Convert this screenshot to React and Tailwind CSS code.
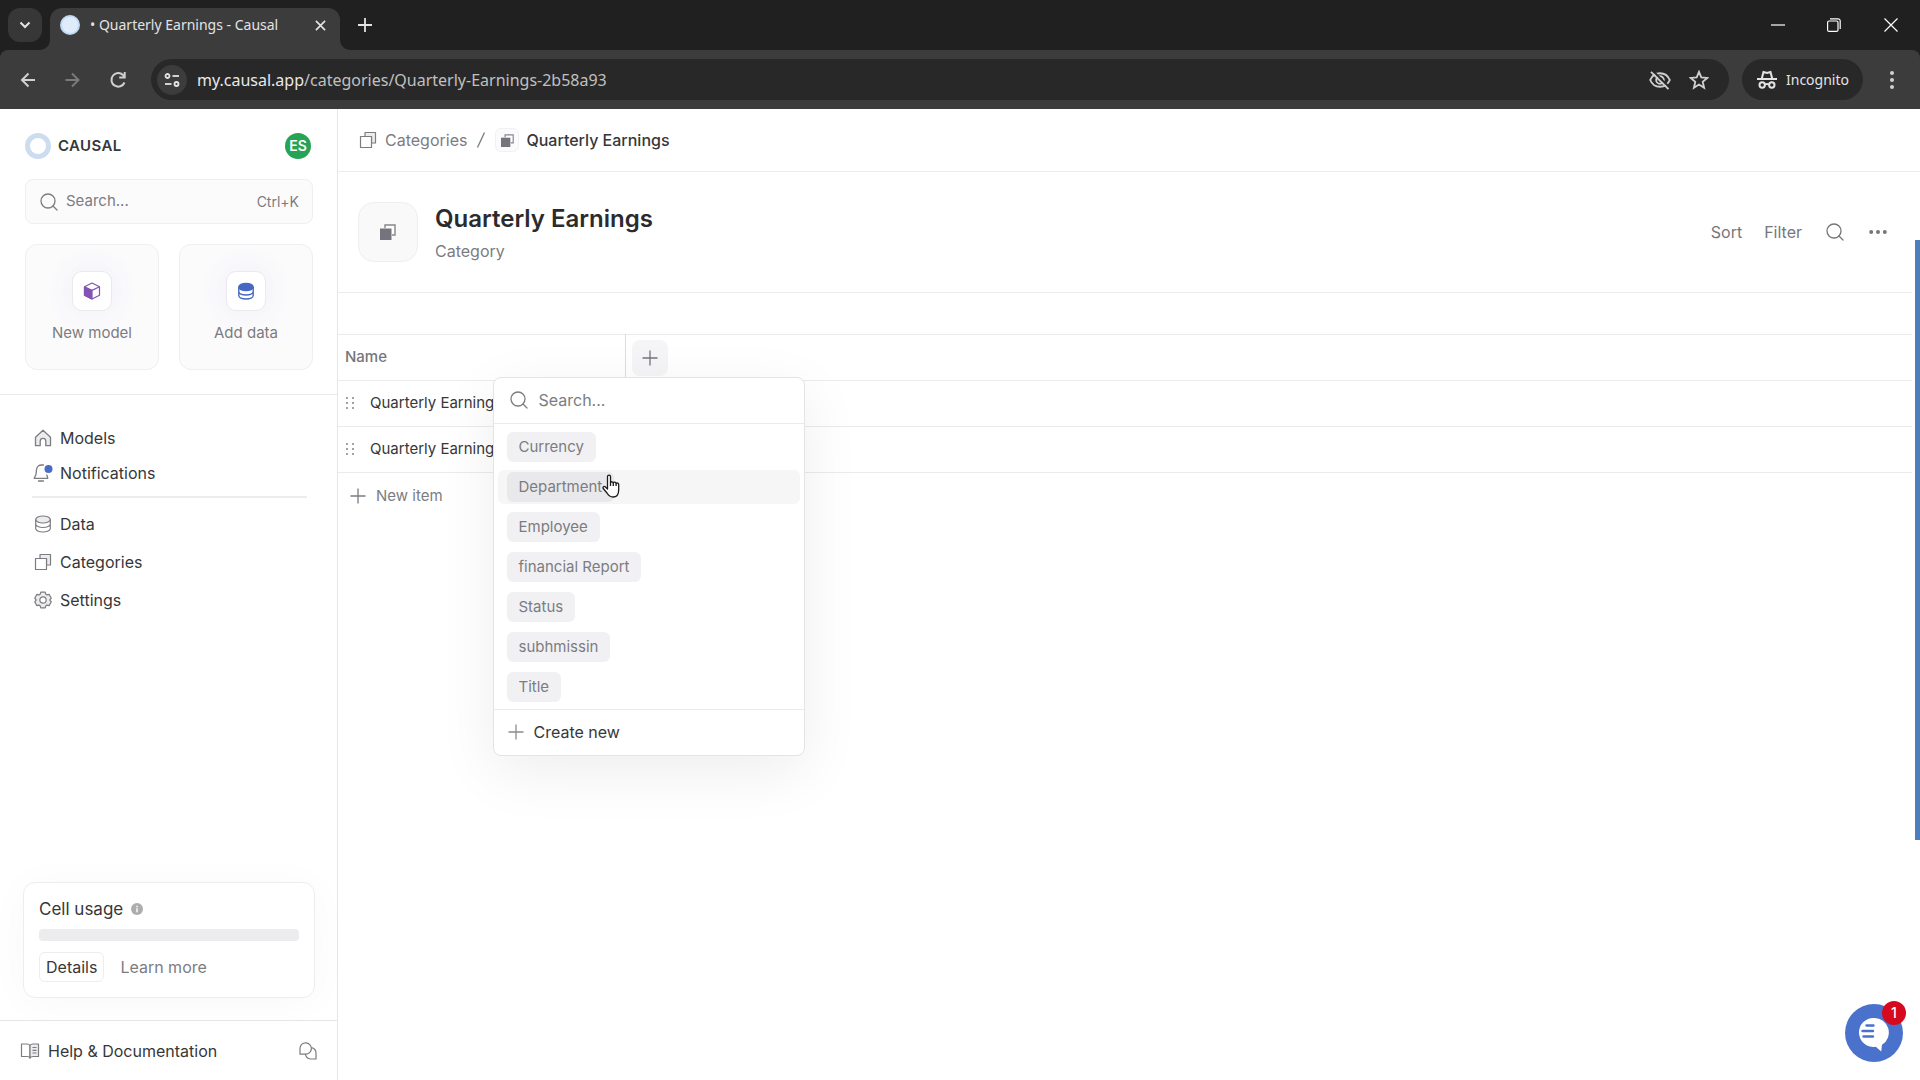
import { useState } from 'react';

const NAV_TOP = [
  { label: 'Models', icon: HomeIcon },
  { label: 'Notifications', icon: BellIcon },
];

const NAV_BOTTOM = [
  { label: 'Data', icon: DataIcon },
  { label: 'Categories', icon: StackIcon },
  { label: 'Settings', icon: GearIcon },
];

const OPTIONS = ['Currency', 'Department', 'Employee', 'financial Report', 'Status', 'subhmissin', 'Title'];

const ROWS = ['Quarterly Earning 1', 'Quarterly Earning 2'];

export default function App() {
  return (
    <div className="flex h-screen flex-col overflow-hidden bg-white font-['Inter',sans-serif] text-[#37373a]">
      <BrowserChrome />
      <div className="flex min-h-0 flex-1">
        <Sidebar />
        <Main />
      </div>
      <div className="absolute top-60 right-0 h-[600px] w-[5px] bg-[#4c7dbd]" />
      <ChatLauncher />
    </div>
  );
}

/* ---------- Browser window ---------- */

function BrowserChrome() {
  return (
    <header className="shrink-0 bg-[#202020] font-['Noto_Sans',sans-serif] text-[#e3e3e3]">
      <div className="flex h-[50px] items-end pl-2">
        <button aria-label="Search tabs" className="mb-2 flex h-[34px] w-[34px] items-center justify-center rounded-xl bg-[#373737]">
          <svg viewBox="0 0 12 12" className="h-3 w-3" fill="none" stroke="currentColor" strokeWidth="2">
            <path d="M1.5 3.5 6 8l4.500-4.500" />
          </svg>
        </button>
        <div className="relative ml-2 flex h-[42px] w-[290px] items-center rounded-t-xl bg-[#3c3c3c] pr-[10px] pb-2 pl-[10px]">
          <span className="h-5 w-5 shrink-0 rounded-full border-2 border-[#c3d9f2] bg-[#dfecfb]" />
          <span className="ml-[10px] flex-1 text-sm whitespace-nowrap">• Quarterly Earnings - Causal</span>
          <button aria-label="Close tab" className="flex h-5 w-5 items-center justify-center">
            <svg viewBox="0 0 12 12" className="h-[11px] w-[11px]" fill="none" stroke="currentColor" strokeWidth="1.800">
              <path d="m1 1 10 10M11 1 1 11" />
            </svg>
          </button>
          {/* flared tab feet */}
          <svg viewBox="0 0 10 10" className="absolute bottom-0 -left-[10px] h-[10px] w-[10px]" fill="#3c3c3c">
            <path d="M10 0v10H0A10 10 0 0 0 10 0z" />
          </svg>
          <svg viewBox="0 0 10 10" className="absolute -right-[10px] bottom-0 h-[10px] w-[10px]" fill="#3c3c3c">
            <path d="M0 0v10h10A10 10 0 0 1 0 0z" />
          </svg>
        </div>
        <button aria-label="New tab" className="mb-[10px] ml-[10px] flex h-[30px] w-[30px] items-center justify-center">
          <svg viewBox="0 0 14 14" className="h-[14px] w-[14px]" fill="none" stroke="currentColor" strokeWidth="1.800">
            <path d="M7 0v14M0 7h14" />
          </svg>
        </button>
        <div className="ml-auto flex h-full items-center">
          <button aria-label="Minimize" className="flex h-full w-14 items-center justify-center">
            <svg viewBox="0 0 14 14" className="h-[14px] w-[14px]" stroke="#fff" strokeWidth="1.200"><path d="M0 7h14" /></svg>
          </button>
          <button aria-label="Restore" className="flex h-full w-14 items-center justify-center">
            <svg viewBox="0 0 14 14" className="h-[14px] w-[14px]" fill="none" stroke="#fff" strokeWidth="1.200">
              <rect x="0.600" y="3" width="10.400" height="10.400" rx="1.500" />
              <path d="M3 .8h8a2.200 2.200 0 0 1 2.200 2.200v8" />
            </svg>
          </button>
          <button aria-label="Close" className="flex h-full w-[58px] items-center justify-center">
            <svg viewBox="0 0 14 14" className="h-[14px] w-[14px]" stroke="#fff" strokeWidth="1.200"><path d="m.5.5 13 13M13.500.5l-13 13" /></svg>
          </button>
        </div>
      </div>

      <div className="flex h-[59px] items-center rounded-t-lg bg-[#3c3c3c] pr-[18px] pl-[18px]">
        <div className="flex items-center gap-[25px] text-[#d0d0d0]">
          <button aria-label="Back">
            <svg viewBox="0 0 20 20" className="h-5 w-5" fill="none" stroke="currentColor" strokeWidth="2"><path d="M17 10H4M10.500 3.500 4 10l6.500 6.500" /></svg>
          </button>
          <button aria-label="Forward" className="text-[#7a7a7a]">
            <svg viewBox="0 0 20 20" className="h-5 w-5" fill="none" stroke="currentColor" strokeWidth="2"><path d="M2.500 10h13M9 3.500l6.500 6.500-6.500 6.500" /></svg>
          </button>
          <button aria-label="Reload">
            <svg viewBox="0 0 20 20" className="h-5 w-5" fill="none" stroke="currentColor" strokeWidth="2">
              <path d="M16.500 12.500A6.800 6.800 0 1 1 15 5l1.500 1.800" />
              <path d="M16.700 2v5.500h-5.500" />
            </svg>
          </button>
        </div>
        <div className="ml-[23px] flex h-[41px] flex-1 items-center rounded-full bg-[#282828] pr-5 pl-[6px]">
          <button aria-label="Site information" className="flex h-[30px] w-[30px] items-center justify-center rounded-full bg-[#3c3c3c]">
            <svg viewBox="0 0 16 16" className="h-4 w-4" fill="none" stroke="#e3e3e3" strokeWidth="1.800">
              <circle cx="3.500" cy="4" r="2" /><path d="M8.500 4H15" />
              <circle cx="12.500" cy="12" r="2" /><path d="M1 12h6.500" />
            </svg>
          </button>
          <p className="ml-[10px] flex-1 text-base text-[#c0c0c0]">
            <span className="text-[#e9e9e9]">my.causal.app</span>/categories/Quarterly-Earnings-2b58a93
          </p>
          <button aria-label="Third-party cookies blocked" className="mr-[18px] text-[#d0d0d0]">
            <svg viewBox="0 0 22 20" className="h-5 w-[22px]" fill="none" stroke="currentColor" strokeWidth="1.900">
              <path d="M1.200 10C3 5.800 6.800 3.200 11 3.200S19 5.800 20.800 10C19 14.200 15.200 16.800 11 16.800S3 14.200 1.200 10z" />
              <circle cx="11" cy="10" r="3.800" />
              <path d="M3.600.6 20.800 17.800" stroke="#282828" strokeWidth="2" />
              <path d="M2 1.800 19.500 19.200" />
            </svg>
          </button>
          <button aria-label="Bookmark" className="text-[#d0d0d0]">
            <svg viewBox="0 0 20 20" className="h-5 w-5" fill="none" stroke="currentColor" strokeWidth="1.800">
              <path d="m10 1.800 2.300 5.600 6 .5-4.600 3.900 1.400 5.900-5.100-3.200-5.100 3.200 1.400-5.900-4.600-3.900 6-.5z" />
            </svg>
          </button>
        </div>
        <button className="ml-[13px] flex h-[41px] w-[121px] items-center rounded-full bg-[#282828] pl-[15px]">
          <svg viewBox="0 0 20 20" className="h-5 w-5" fill="none" stroke="currentColor" strokeWidth="2">
            <path d="M0 9h20" />
            <path d="M4.800 8.500 6.500 2l3.500 1 3.500-1 1.700 6.500" />
            <circle cx="5.200" cy="15" r="2.700" /><circle cx="14.800" cy="15" r="2.700" />
            <path d="M7.900 14.500q2.100-1.200 4.200 0" />
          </svg>
          <span className="ml-[9px] text-sm">Incognito</span>
        </button>
        <button aria-label="Menu" className="ml-[19px] flex h-5 w-5 items-center justify-center">
          <svg viewBox="0 0 4 18" className="h-[18px] w-1" fill="#d0d0d0">
            <circle cx="2" cy="2" r="2" /><circle cx="2" cy="9" r="2" /><circle cx="2" cy="16" r="2" />
          </svg>
        </button>
      </div>
    </header>
  );
}

/* ---------- Sidebar ---------- */

function Sidebar() {
  return (
    <aside className="flex w-[338px] shrink-0 flex-col border-r border-[#e6e6e9]">
      <div className="border-b border-[#ebebed] pt-6 pr-6 pb-6 pl-[25px]">
        <div className="flex items-center justify-between pr-[2px]">
          <div className="flex items-center gap-[7px]">
            <span className="h-[26px] w-[26px] rounded-full border-[5px] border-[#cddcee]" />
            <span className="text-[15px] font-semibold tracking-wide">CAUSAL</span>
          </div>
          <button className="flex h-[26px] w-[26px] items-center justify-center rounded-full bg-[#27a356] text-sm font-semibold text-white">ES</button>
        </div>

        <label className="mt-5 flex h-[45px] items-center rounded-lg border border-[#efeff2] bg-[#fbfbfc] pr-[13px] pl-[14px] text-[#7c7c81]">
          <SearchIcon />
          <input
            aria-label="Search"
            placeholder="Search..."
            className="ml-2 w-0 flex-1 bg-transparent text-[15px] outline-none placeholder:text-[#7c7c81]"
          />
          <kbd className="font-['Inter',sans-serif] text-sm">Ctrl+K</kbd>
        </label>

        <div className="mt-5 grid grid-cols-2 gap-5">
          <ActionCard label="New model"><CubeIcon /></ActionCard>
          <ActionCard label="Add data"><DatabaseIcon /></ActionCard>
        </div>
      </div>

      <nav className="pt-[25px] pr-[30px] pl-8">
        {NAV_TOP.map((item) => (
          <NavLink key={item.label} {...item} height="h-[35px]" />
        ))}
        <hr className="mt-[6px] mb-[7px] border-t-2 border-[#ededef]" />
        {NAV_BOTTOM.map((item) => (
          <NavLink key={item.label} {...item} height="h-[38px]" />
        ))}
      </nav>

      <section className="mr-[22px] mb-[22px] ml-[23px] mt-auto rounded-xl border border-[#ededf0] px-[15px] pt-[14px] pb-[15px] shadow-[0_4px_40px_rgba(0,0,0,0.03)]">
        <div className="flex items-center gap-2">
          <h2 className="text-[17px] leading-6">Cell usage</h2>
          <svg viewBox="0 0 12 12" className="h-3 w-3" fill="#adadb0">
            <circle cx="6" cy="6" r="6" />
            <path d="M5.300 5.200h1.400v4H5.300zM5.300 2.800h1.400v1.400H5.300z" fill="#fff" />
          </svg>
        </div>
        <div className="mt-2 h-3 rounded-sm bg-[#ececee]" />
        <div className="mt-[11px] flex items-center gap-4 text-base">
          <button className="h-[30px] rounded-md border border-[#ededf0] px-[6px]">Details</button>
          <a href="#learn" className="text-[#7c7c81]">Learn more</a>
        </div>
      </section>

      <footer className="flex h-[60px] shrink-0 items-center border-t border-[#e6e6e9] pr-5 pl-5">
        <a href="#help" className="flex items-center gap-2 text-base">
          <BookIcon />
          Help &amp; Documentation
        </a>
        <button aria-label="Chat" className="ml-auto"><ChatIcon /></button>
      </footer>
    </aside>
  );
}

function ActionCard({ label, children }) {
  return (
    <button className="flex h-[126px] flex-col items-center rounded-xl border border-[#efeff2] bg-[#fbfbfc] pt-[26px] text-[15px] text-[#7c7c81]">
      <span className="flex h-10 w-10 items-center justify-center rounded-[10px] border border-[#e9e9ee] bg-white shadow-[0_0_30px_rgba(90,90,200,0.08)]">
        {children}
      </span>
      <span className="mt-3 leading-5">{label}</span>
    </button>
  );
}

function NavLink({ label, icon: Icon, height }) {
  return (
    <a href={`#${label.toLowerCase()}`} className={`flex items-center gap-2 pl-[2px] text-base ${height}`}>
      <Icon />
      {label}
    </a>
  );
}

/* ---------- Main area ---------- */

function Main() {
  return (
    <main className="min-w-0 flex-1 pr-2">
      <div className="-mr-2 flex h-[63px] items-center border-b border-[#ededf0] pl-[21px] text-base">
        <a href="#categories" className="flex items-center gap-2 text-[#7c7c81]">
          <StackIcon />
          Categories
        </a>
        <svg viewBox="0 0 8 16" className="ml-[10px] h-4 w-2" stroke="#7c7c81" strokeWidth="1.300"><path d="M7.500.5.5 15.500" /></svg>
        <span className="ml-[10px] flex h-6 w-6 items-center justify-center rounded-md border border-[#f1f1f5] bg-[#fbfbfd]">
          <FilledStackIcon className="h-[13px] w-[13px]" />
        </span>
        <span className="ml-[7px] font-medium">Quarterly Earnings</span>
      </div>

      <div className="flex h-[121px] items-center border-b border-[#ebebee] pr-[25px] pl-5">
        <div className="flex h-[60px] w-[60px] items-center justify-center rounded-2xl border border-[#efeff2] bg-[#f9f9fa]">
          <FilledStackIcon className="h-4 w-4" />
        </div>
        <div className="ml-[17px] pt-1">
          <h1 className="text-2xl leading-8 font-semibold text-[#2b2b2e]">Quarterly Earnings</h1>
          <p className="mt-[2px] text-base leading-7 text-[#7c7c81]">Category</p>
        </div>
        <div className="ml-auto flex items-center text-base text-[#76767b]">
          <button>Sort</button>
          <button className="ml-[22px]">Filter</button>
          <button aria-label="Search" className="ml-6"><SearchIcon /></button>
          <button aria-label="More" className="ml-[25px]">
            <svg viewBox="0 0 18 4" className="h-1 w-[18px]" fill="currentColor">
              <circle cx="2.200" cy="2" r="2" /><circle cx="9" cy="2" r="2" /><circle cx="15.800" cy="2" r="2" />
            </svg>
          </button>
        </div>
      </div>

      <table className="mt-[41px] w-full table-fixed border-collapse text-left text-[15px]">
        <thead>
          <tr className="h-[46px] border-y border-[#ebebee]">
            <th className="w-[287px] border-r border-[#dcdce0] pl-[7px] font-medium text-[#76767b]">Name</th>
            <th className="pl-[6px] font-normal">
              <div className="relative w-9">
                <button aria-label="Add column" className="flex h-9 w-9 items-center justify-center rounded-lg bg-[#f5f5f7] text-[#76767b]">
                  <PlusIcon />
                </button>
                <ColumnMenu />
              </div>
            </th>
          </tr>
        </thead>
        <tbody>
          {ROWS.map((row) => (
            <tr key={row} className="h-[46px] border-b border-[#ebebee]">
              <td colSpan="2">
                <div className="flex items-center pl-[7px]">
                  <svg viewBox="0 0 10 14" className="h-[14px] w-[10px]" fill="#a2a2a6">
                    <path d="M1 0h2v2H1zM7 0h2v2H7zM1 5h2v2H1zM7 5h2v2H7zM1 10h2v2H1zM7 10h2v2H7z" />
                  </svg>
                  <span className="ml-[15px]">{row}</span>
                </div>
              </td>
            </tr>
          ))}
        </tbody>
      </table>
      <button className="flex h-[46px] items-center gap-[10px] pl-3 text-[15px] text-[#7c7c81]">
        <PlusIcon />
        New item
      </button>
    </main>
  );
}

function ColumnMenu() {
  const [active, setActive] = useState('Department');
  const [query, setQuery] = useState('');
  const shown = OPTIONS.filter((o) => o.toLowerCase().includes(query.toLowerCase()));

  return (
    <div className="absolute top-[37px] -right-[137px] z-10 w-[312px] rounded-lg border border-[#e4e4e8] bg-white shadow-[0_16px_60px_rgba(0,0,0,0.07)]">
      <label className="flex h-[46px] items-center border-b border-[#ebebee] px-4 text-[#7c7c81]">
        <SearchIcon />
        <input
          aria-label="Search categories"
          placeholder="Search..."
          value={query}
          onChange={(e) => setQuery(e.target.value)}
          className="ml-[11px] w-0 flex-1 bg-transparent text-base outline-none placeholder:text-[#7c7c81]"
        />
      </label>
      <ul className="px-1 pt-[3px] pb-[2px]">
        {shown.map((option) => (
          <li key={option} className="flex h-10 items-center">
            <button
              onMouseEnter={() => setActive(option)}
              className={`relative flex h-[34px] w-full items-center rounded-md px-[9px] ${active === option ? 'bg-[#f6f6f7]' : ''}`}
            >
              <span className={`rounded-md px-3 text-[15px] leading-[30px] text-[#7c7c81] ${active === option ? 'bg-[#e9e9ec]' : 'bg-[#f1f1f3]'}`}>
                {option}
              </span>
              {active === option && <HandCursor />}
            </button>
          </li>
        ))}
      </ul>
      <button className="flex h-[46px] w-full items-center gap-[10px] border-t border-[#ebebee] px-[14px] text-base">
        <span className="text-[#8c8c91]"><PlusIcon /></span>
        Create new
      </button>
    </div>
  );
}

function ChatLauncher() {
  return (
    <button aria-label="Open chat" className="absolute right-[17px] bottom-[18px] flex h-[58px] w-[58px] items-center justify-center rounded-full bg-[#4a72cc]">
      <svg viewBox="0 0 30 34" className="mt-1 h-[34px] w-[30px]" fill="#fff">
        <path d="M15 0a14.500 14.500 0 0 1 8 26.800l-.8 6.700-5.400-4.700A14.500 14.500 0 1 1 15 0z" />
        <path d="M7.500 7.500h7M3.500 13h10.500M4.500 18.500h9.500" stroke="#4a72cc" strokeWidth="2.400" strokeLinecap="round" />
      </svg>
      <span className="absolute -top-[3px] -right-[3px] flex h-6 w-6 items-center justify-center rounded-full bg-[#d60a1e] text-sm font-medium text-white">1</span>
    </button>
  );
}

/* ---------- Icons ---------- */

function SearchIcon() {
  return (
    <svg viewBox="0 0 18 18" className="h-[18px] w-[18px] shrink-0" fill="none" stroke="currentColor" strokeWidth="1.300" strokeLinecap="round">
      <circle cx="8" cy="8" r="7" />
      <path d="m13 13 4 4" />
    </svg>
  );
}

function PlusIcon() {
  return (
    <svg viewBox="0 0 16 16" className="h-4 w-4" stroke="currentColor" strokeWidth="1.300">
      <path d="M8 .5v15M.5 8h15" />
    </svg>
  );
}

function HomeIcon() {
  return (
    <svg viewBox="0 0 18 18" className="h-[18px] w-[18px]" fill="#ececee" stroke="#7c7c81" strokeWidth="1.300" strokeLinejoin="round">
      <path d="M1.500 8.200 9 1.300l7.500 6.900v8.500h-4.700v-4.500a2.800 2.800 0 0 0-5.600 0v4.500H1.500z" />
    </svg>
  );
}

function BellIcon() {
  return (
    <svg viewBox="0 0 18 18" className="h-[18px] w-[18px] overflow-visible" fill="none" stroke="#7c7c81" strokeWidth="1.300" strokeLinecap="round" strokeLinejoin="round">
      <path d="M9.500 1H7.500a5 5 0 0 0-5 4.600L2 10.500.2 14.300h13.600L12.800 11M4.500 17h5" />
      <circle cx="14.500" cy="5" r="4" fill="#4a6cc4" stroke="none" />
    </svg>
  );
}

function DataIcon() {
  return (
    <svg viewBox="0 0 18 18" className="h-[18px] w-[18px]" fill="none" stroke="#7c7c81" strokeWidth="1.200">
      <ellipse cx="9" cy="4.500" rx="7.300" ry="3.500" fill="#ececee" />
      <path d="M1.700 4.500v9c0 2 3.300 3.500 7.300 3.500s7.300-1.500 7.300-3.500v-9M1.700 9c0 2 3.300 3.500 7.300 3.500s7.300-1.500 7.300-3.500" />
    </svg>
  );
}

function StackIcon() {
  return (
    <svg viewBox="0 0 18 18" className="h-[18px] w-[18px]" fill="none" stroke="#7c7c81" strokeWidth="1.200" strokeLinejoin="round">
      <path d="M6 5.500v-4h10.500V12h-4V5.500z" fill="#ececee" />
      <rect x="1.500" y="5.500" width="11" height="11" fill="#fff" />
    </svg>
  );
}

function FilledStackIcon({ className }) {
  return (
    <svg viewBox="0 0 16 16" className={className}>
      <path d="M5 4V1h10v10h-3" fill="#fff" stroke="#85858c" strokeWidth="1.400" />
      <rect x="0" y="4.500" width="11.500" height="11.500" fill="#74747c" />
    </svg>
  );
}

function GearIcon() {
  return (
    <svg viewBox="0 0 18 18" className="h-[18px] w-[18px]" stroke="#7c7c81" strokeWidth="1.200" strokeLinejoin="round">
      <path
        d="M6.800 1.200h4.400l.7 2.100 1 .6 2.200-.5 2.200 3.800L15.800 9l1.500 1.800-2.200 3.800-2.200-.5-1 .6-.7 2.100H6.800l-.7-2.100-1-.6-2.200.5-2.200-3.800L2.200 9 .7 7.200l2.200-3.800 2.200.5 1-.6z"
        fill="#ececee"
      />
      <circle cx="9" cy="9" r="3.200" fill="#fff" />
    </svg>
  );
}

function CubeIcon() {
  return (
    <svg viewBox="0 0 18 18" className="h-[18px] w-[18px]" fill="#fff" stroke="#8353b5" strokeWidth="1.200" strokeLinejoin="round">
      <path d="m9 1 7.500 3.700v8.600L9 17l-7.500-3.700V4.700z" />
      <path d="M1.500 4.700 9 8.400V17l-7.500-3.700z" fill="#8353b5" />
      <path d="M9 8.400l7.500-3.700" />
    </svg>
  );
}

function DatabaseIcon() {
  return (
    <svg viewBox="0 0 18 18" className="h-[18px] w-[18px]" fill="none" stroke="#4568c4" strokeWidth="1.400">
      <ellipse cx="9" cy="5" rx="7.200" ry="3.600" fill="#4568c4" />
      <path d="M1.800 5v8.500c0 2 3.200 3.500 7.200 3.500s7.200-1.500 7.200-3.500V5M1.800 9.500C1.800 11.500 5 13 9 13s7.200-1.500 7.200-3.500" />
    </svg>
  );
}

function BookIcon() {
  return (
    <svg viewBox="0 0 20 18" className="h-[18px] w-5" fill="none" stroke="#7c7c81" strokeWidth="1.200" strokeLinejoin="round">
      <path d="M10 3.500C9.500 2.500 8.500 2 7 2H1.500v12.500H7c1.500 0 2.500.5 3 1.500z" />
      <path d="M10 3.500c.5-1 1.500-1.500 3-1.500h5.500v12.500H13c-1.500 0-2.500.5-3 1.500z" fill="#ececee" />
      <path d="M12.500 5.500h4M12.500 8.300h4M12.500 11h4" />
    </svg>
  );
}

function ChatIcon() {
  return (
    <svg viewBox="0 0 18 18" className="h-[18px] w-[18px]" fill="none" stroke="#7c7c81" strokeWidth="1.200" strokeLinejoin="round">
      <path d="M1 12.200h5.500A5.700 5.700 0 1 0 1 6.500z" />
      <path d="M12.300 5.700a5.700 5.700 0 0 1 4.700 5.600V17h-5.500a5.700 5.700 0 0 1-5.100-4.800" />
    </svg>
  );
}

function HandCursor() {
  return (
    <svg viewBox="0 0 18 24" className="absolute top-1 left-[104px] h-6 w-[18px]" fill="#fff" stroke="#1c1c1e" strokeWidth="1.300" strokeLinejoin="round">
      <path d="M5.500 15V2.600a1.500 1.500 0 0 1 3 0v6a1.500 1.500 0 0 1 2.800.3 1.500 1.500 0 0 1 2.800.6 1.500 1.500 0 0 1 2.600 1v5.200c0 4.300-2 7.300-5.700 7.300-3 0-4.500-1.500-6-4L1.200 14.500c-.8-1.300.8-2.700 2-1.700z" />
      <path d="M8.500 8.600V12M11.300 8.900V12M14.100 9.500V12" fill="none" />
    </svg>
  );
}
